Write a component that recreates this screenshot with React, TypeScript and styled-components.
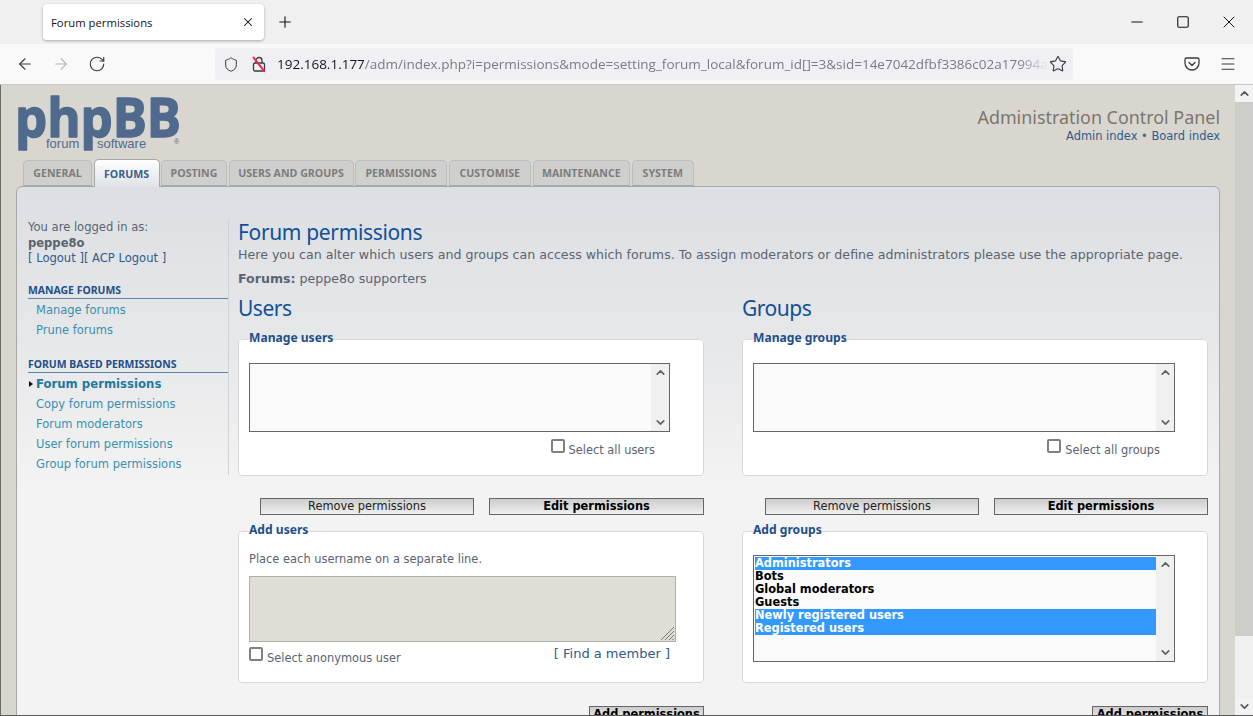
import styled, { createGlobalStyle } from "styled-components";
import {
    ArrowLeft,
    ArrowRight,
    ChevronDown,
    ChevronUp,
    Menu,
    Minus,
    Plus,
    RotateCw,
    Shield,
    Square,
    Star,
    X,
} from "lucide-react";

const GlobalStyle = createGlobalStyle`
    html, body {
        margin: 0;
        padding: 0;
        height: 100%;
        overflow: hidden;
    }
    * {
        box-sizing: border-box;
    }
`;

const BODY_FONT = `"DejaVu Sans", Verdana, sans-serif`;
const HEAD_FONT = `"Noto Sans", "Open Sans", sans-serif`;
const UI_FONT = `"Open Sans", "Noto Sans", sans-serif`;
const TEXT_GREY = "#5a6470";

const Window = styled.div`
    width: 1253px;
    height: 716px;
    display: flex;
    flex-direction: column;
    overflow: hidden;
    background: #f0f0f0;
    font-family: ${BODY_FONT};
`;

const TabBar = styled.div`
    flex: 0 0 44px;
    display: flex;
    align-items: center;
    padding: 0 0 0 43px;
    color: #15141a;
`;

const BrowserTab = styled.div`
    width: 221px;
    height: 36px;
    display: flex;
    align-items: center;
    justify-content: space-between;
    padding: 0 9px 0 8px;
    background: #fff;
    border-radius: 4px;
    box-shadow: 0 1px 3px rgba(0, 0, 0, 0.3);
    font: 11.3px ${UI_FONT};
`;

const NewTab = styled.div`
    display: flex;
    margin-left: 12px;
`;

const WindowControls = styled.div`
    margin-left: auto;
    display: flex;
    align-items: center;
    gap: 26px;
    padding-right: 14px;
`;

const WindowControl = styled.div`
    width: 20px;
    display: flex;
    justify-content: center;
`;

const Toolbar = styled.div`
    flex: 0 0 41px;
    display: flex;
    align-items: center;
    padding: 0 16px 0 16px;
    background: #f9f9f9;
    border-bottom: 1px solid #c8c8c8;
    color: #3b3a40;
`;

const NavButton = styled.div<{ $off?: boolean }>`
    display: flex;
    width: 18px;
    margin-right: 18px;
    color: ${(p) => (p.$off ? "#b9b9bd" : "#3b3a40")};
`;

const UrlBar = styled.div`
    width: 858px;
    height: 32px;
    margin-left: 91px;
    display: flex;
    align-items: center;
    padding: 0 6px 0 8px;
    background: #f0f0f4;
    border-radius: 4px;
`;

const UrlIcon = styled.div`
    position: relative;
    display: flex;
    width: 16px;
    margin-right: 12px;
`;

const LockSlash = styled.span`
    position: absolute;
    left: 7px;
    top: -1px;
    width: 1.5px;
    height: 19px;
    background: #e22850;
    transform: rotate(-38deg);
`;

const UrlText = styled.div`
    flex: 1;
    min-width: 0;
    overflow: hidden;
    white-space: nowrap;
    font: 13.5px ${UI_FONT};
    color: #7b7a80;
    margin-left: -2px;
    -webkit-mask-image: linear-gradient(to right, #000 96%, transparent 100%);
    mask-image: linear-gradient(to right, #000 96%, transparent 100%);
`;

const UrlHost = styled.span`
    color: #15141a;
`;

const RightIcons = styled.div`
    display: flex;
    align-items: center;
    gap: 19px;
    margin-left: auto;
`;

const Viewport = styled.div`
    flex: 1;
    min-height: 0;
    display: flex;
    border-left: 1px solid #6a6a6a;
    border-bottom: 1px solid #5a5a5a;
`;

const Page = styled.div`
    flex: 1;
    min-width: 0;
    overflow: hidden;
    background: #d9d6cf;
    padding: 0 15px 0 15px;
`;

const Scrollbar = styled.div`
    flex: 0 0 18px;
    display: flex;
    flex-direction: column;
    background: #f0f0f0;
    color: #555;
`;

const ScrollArrow = styled.div`
    height: 17px;
    display: flex;
    align-items: center;
    justify-content: center;
    background: #f3f3f3;
`;

const ScrollThumb = styled.div`
    height: 534px;
    background: #cdcdc9;
`;

const ScrollRest = styled.div`
    flex: 1;
`;

const Header = styled.header`
    height: 75px;
    display: flex;
    justify-content: space-between;
`;

const LogoMark = styled.svg`
    display: block;
    margin-top: 7px;
`;

const HeaderRight = styled.div`
    padding-top: 21px;
    text-align: right;
`;

const PanelTitle = styled.div`
    font: 17.9px/22px ${HEAD_FONT};
    color: #7a7670;
`;

const HeaderLinks = styled.div`
    font-size: 11.45px;
    line-height: 17px;
    color: #536482;
`;

const HeaderLink = styled.a`
    color: #2e5b8c;
`;

const Tabs = styled.nav`
    height: 26px;
    display: flex;
    align-items: flex-end;
    padding-left: 7px;
    gap: 1.5px;
    position: relative;
    z-index: 1;
`;

const TabItem = styled.a<{ $active?: boolean; $w: number }>`
    flex: 0 0 ${(p) => p.$w}px;
    height: ${(p) => (p.$active ? "28px" : "26px")};
    margin-bottom: ${(p) => (p.$active ? "-1px" : "0")};
    display: flex;
    align-items: center;
    justify-content: center;
    font: bold 10.6px ${UI_FONT};
    color: ${(p) => (p.$active ? "#35608f" : "#7c7c7c")};
    background: ${(p) =>
        p.$active ? "linear-gradient(#ffffff, #dfe2e6)" : "#cfcfcd"};
    border: 1px solid ${(p) => (p.$active ? "#a8a8a8" : "#bcbcbc")};
    border-bottom: ${(p) => (p.$active ? "none" : "1px solid #a8a8a8")};
    border-radius: 5px 5px 0 0;
`;

const Panel = styled.main`
    display: grid;
    grid-template-columns: 212px 1fr;
    padding: 33px 11px 60px 0;
    background: linear-gradient(#dcdfe3 0, #e6e7e9 150px, #f3f3f3 300px);
    border: 1px solid #a8a8a8;
    border-radius: 6px 6px 0 0;
`;

const Sidebar = styled.aside`
    height: 255px;
    padding-left: 11px;
    border-right: 1px solid #cfd2d6;
`;

const LoginBlock = styled.div`
    font-size: 11.55px;
    line-height: 15.5px;
    color: ${TEXT_GREY};
    margin-bottom: 16px;
`;

const LoginName = styled.div`
    font-weight: bold;
`;

const LoginLinks = styled.div`
    color: #2e5b8c;
`;

const MenuHead = styled.h2`
    margin: 0 0 2px;
    font: bold 10.45px/15px ${HEAD_FONT};
    color: #1d4f8a;
    border-bottom: 1px solid #5c85a8;
`;

const MenuList = styled.ul`
    list-style: none;
    margin: 0 0 16px;
    padding: 0;
`;

const MenuItem = styled.li<{ $active?: boolean }>`
    position: relative;
    height: 20px;
    padding-left: 8px;
    font-size: ${(p) => (p.$active ? "11.7px" : "11.5px")};
    line-height: 18px;
    font-weight: ${(p) => (p.$active ? "bold" : "normal")};
    color: ${(p) => (p.$active ? "#1f7a9e" : "#3a8fb0")};
`;

const ActiveArrow = styled.span`
    position: absolute;
    left: 1px;
    top: 6px;
    width: 0;
    height: 0;
    border-left: 4px solid #111;
    border-top: 3px solid transparent;
    border-bottom: 3px solid transparent;
`;

const Content = styled.section`
    padding-left: 9px;
`;

const Title = styled.h1`
    margin: 0;
    font: normal 21px/25px ${HEAD_FONT};
    letter-spacing: -0.35px;
    color: #115098;
`;

const Intro = styled.p`
    margin: 0;
    font-size: 12.62px;
    line-height: 20px;
    white-space: nowrap;
    color: ${TEXT_GREY};
`;

const ForumLine = styled.p`
    margin: 4px 0 0;
    font-size: 12.6px;
    line-height: 20px;
    color: ${TEXT_GREY};
`;

const Columns = styled.div`
    display: grid;
    grid-template-columns: 466px 466px;
    column-gap: 38px;
`;

const ColumnTitle = styled.h2`
    margin: 4px 0 8px;
    font: normal 21px/30px ${HEAD_FONT};
    letter-spacing: -0.5px;
    color: #115098;
`;

const Field = styled.fieldset<{ $h: number }>`
    height: ${(p) => p.$h}px;
    margin: 0;
    padding: 0 10px;
    min-width: 0;
    background: #fff;
    border: 1px solid #d7d7d7;
    border-radius: 4px;
`;

const FieldLegend = styled.legend`
    padding: 0 0 3px;
    font: bold 12.1px/14px ${HEAD_FONT};
    color: #1d4f8a;
`;

const ListBox = styled.div<{ $w: number; $h: number; $mt: number }>`
    width: ${(p) => p.$w}px;
    height: ${(p) => p.$h}px;
    margin-top: ${(p) => p.$mt}px;
    display: flex;
    background: #fafafa;
    border: 1px solid #666;
`;

const Options = styled.div`
    flex: 1;
    padding: 1px 0 0 1px;
`;

const OptionRow = styled.div<{ $selected?: boolean }>`
    height: 13px;
    font: bold 11.4px/13px ${BODY_FONT};
    color: ${(p) => (p.$selected ? "#fff" : "#000")};
    background: ${(p) => (p.$selected ? "#3399ff" : "transparent")};
`;

const ListScroll = styled.div`
    flex: 0 0 18px;
    display: flex;
    flex-direction: column;
    justify-content: space-between;
    align-items: center;
    padding: 2px 0;
    background: #f0f0f0;
    color: #606060;
`;

const CheckRow = styled.label<{ $right: number }>`
    display: flex;
    justify-content: flex-end;
    align-items: flex-start;
    margin-top: 7px;
    padding-right: ${(p) => p.$right}px;
    font-size: 11.4px;
    line-height: 14px;
    color: ${TEXT_GREY};
`;

const CheckBox = styled.input`
    appearance: none;
    flex: none;
    width: 14px;
    height: 14px;
    margin: 0 4px 0 0;
    background: #fff;
    border: 2px solid #808080;
    border-radius: 2px;
`;

const CheckText = styled.span`
    padding-top: 4px;
`;

const ButtonRow = styled.div`
    display: flex;
    justify-content: flex-end;
    gap: 15px;
    margin: 22px 0 8px;
`;

const ActionButton = styled.button<{ $w: number; $bold?: boolean }>`
    width: ${(p) => p.$w}px;
    height: 17px;
    padding: 0;
    font: ${(p) => (p.$bold ? "bold" : "normal")} 11.4px/15px ${BODY_FONT};
    color: ${(p) => (p.$bold ? "#000" : "#222")};
    background: linear-gradient(#cccccc, #f0f0f0);
    border: 1px solid #666;
`;

const AddRow = styled.div`
    display: flex;
    justify-content: flex-end;
    margin-top: 23px;
`;

const Hint = styled.p`
    margin: 12px 0 10px;
    font-size: 11.45px;
    line-height: 14px;
    color: ${TEXT_GREY};
`;

const NamesWrap = styled.div`
    position: relative;
    width: 427px;
    height: 66px;
`;

const NamesBox = styled.textarea`
    display: block;
    width: 100%;
    height: 100%;
    margin: 0;
    resize: none;
    background: #e0dcd6;
    border: 1px solid #b0aeaa;
    border-radius: 0;
    outline: none;
`;

const ResizeGrip = styled.svg`
    position: absolute;
    right: 1px;
    bottom: 1px;
`;

const AddFoot = styled.div`
    display: flex;
    justify-content: space-between;
    margin-top: 5px;
    padding-right: 23px;
`;

const AnonLabel = styled.label`
    display: flex;
    align-items: flex-start;
    font-size: 11.4px;
    line-height: 14px;
    color: ${TEXT_GREY};
`;

const FindLink = styled.div`
    font-size: 13px;
    line-height: 14px;
    color: #2e5b8c;
`;

const CHEVRON = { size: 13, strokeWidth: 3 };

const TABS = [
    { label: "GENERAL", w: 69 },
    { label: "FORUMS", w: 66, active: true },
    { label: "POSTING", w: 66 },
    { label: "USERS AND GROUPS", w: 125 },
    { label: "PERMISSIONS", w: 92 },
    { label: "CUSTOMISE", w: 82.5 },
    { label: "MAINTENANCE", w: 97.5 },
    { label: "SYSTEM", w: 62.5 },
];

const GROUPS = [
    { name: "Administrators", selected: true },
    { name: "Bots" },
    { name: "Global moderators" },
    { name: "Guests" },
    { name: "Newly registered users", selected: true },
    { name: "Registered users", selected: true },
];

function ListArrows() {
    return (
        <ListScroll>
            <ChevronUp {...CHEVRON} />
            <ChevronDown {...CHEVRON} />
        </ListScroll>
    );
}

function Logo() {
    return (
        <LogoMark width="170" height="62" viewBox="0 0 170 62">
            <text
                x="-1"
                y="45"
                fontFamily="'Open Sans', sans-serif"
                fontWeight="bold"
                fontSize="54"
                textLength="166"
                lengthAdjust="spacingAndGlyphs"
                fill="#4f6a8c"
                stroke="#4f6a8c"
                strokeWidth="1.5"
                strokeLinejoin="round"
            >
                phpBB
            </text>
            <text x="30" y="56" fontFamily="'Liberation Sans', sans-serif" fontSize="13" fill="#4f6a8c">
                forum
            </text>
            <text x="81" y="56" fontFamily="'Liberation Sans', sans-serif" fontSize="13" fill="#4f6a8c">
                software
            </text>
            <text x="158" y="52" fontFamily="'Liberation Sans', sans-serif" fontSize="7" fill="#4f6a8c">
                ®
            </text>
        </LogoMark>
    );
}

function App() {
    return (
        <Window>
            <GlobalStyle />
            <TabBar>
                <BrowserTab>
                    Forum permissions
                    <X size={14} strokeWidth={1.8} />
                </BrowserTab>
                <NewTab>
                    <Plus size={18} strokeWidth={1.5} />
                </NewTab>
                <WindowControls>
                    <WindowControl>
                        <Minus size={18} strokeWidth={1.1} absoluteStrokeWidth />
                    </WindowControl>
                    <WindowControl>
                        <Square size={14} strokeWidth={1.1} absoluteStrokeWidth />
                    </WindowControl>
                    <WindowControl>
                        <X size={20} strokeWidth={1} absoluteStrokeWidth />
                    </WindowControl>
                </WindowControls>
            </TabBar>

            <Toolbar>
                <NavButton>
                    <ArrowLeft size={18} strokeWidth={1.5} />
                </NavButton>
                <NavButton $off>
                    <ArrowRight size={18} strokeWidth={1.5} />
                </NavButton>
                <NavButton>
                    <RotateCw size={18} strokeWidth={1.5} />
                </NavButton>
                <UrlBar>
                    <UrlIcon>
                        <Shield size={17} strokeWidth={1.5} />
                    </UrlIcon>
                    <UrlIcon>
                        <svg width="16" height="16" viewBox="0 0 16 16" fill="none" stroke="#3b3a40" strokeWidth="1.3">
                            <rect x="2.5" y="7" width="11" height="8" rx="1.5" />
                            <path d="M5 7V4.5a3 3 0 0 1 6 0V7" />
                        </svg>
                        <LockSlash />
                    </UrlIcon>
                    <UrlText>
                        <UrlHost>192.168.1.177</UrlHost>
                        /adm/index.php?i=permissions&amp;mode=setting_forum_local&amp;forum_id[]=3&amp;sid=14e7042dfbf3386c02a17994a
                    </UrlText>
                    <Star size={18} strokeWidth={1.5} />
                </UrlBar>
                <RightIcons>
                    <svg width="16" height="16" viewBox="0 0 16 16" fill="none" stroke="#3b3a40" strokeWidth="1.3" strokeLinecap="round" strokeLinejoin="round">
                        <path d="M2.5 2h11A1.5 1.5 0 0 1 15 3.5V7a7 7 0 0 1-14 0V3.5A1.5 1.5 0 0 1 2.5 2z" />
                        <path d="M5 6.5l3 3 3-3" />
                    </svg>
                    <Menu size={18} strokeWidth={1.4} />
                </RightIcons>
            </Toolbar>

            <Viewport>
                <Page>
                    <Header>
                        <Logo />
                        <HeaderRight>
                            <PanelTitle>Administration Control Panel</PanelTitle>
                            <HeaderLinks>
                                <HeaderLink>Admin index</HeaderLink> • <HeaderLink>Board index</HeaderLink>
                            </HeaderLinks>
                        </HeaderRight>
                    </Header>

                    <Tabs>
                        {TABS.map((tab) => (
                            <TabItem key={tab.label} $w={tab.w} $active={tab.active}>
                                {tab.label}
                            </TabItem>
                        ))}
                    </Tabs>

                    <Panel>
                        <Sidebar>
                            <LoginBlock>
                                You are logged in as:
                                <LoginName>peppe8o</LoginName>
                                <LoginLinks>[ Logout ][ ACP Logout ]</LoginLinks>
                            </LoginBlock>

                            <MenuHead>MANAGE FORUMS</MenuHead>
                            <MenuList>
                                <MenuItem>Manage forums</MenuItem>
                                <MenuItem>Prune forums</MenuItem>
                            </MenuList>

                            <MenuHead>FORUM BASED PERMISSIONS</MenuHead>
                            <MenuList>
                                <MenuItem $active>
                                    <ActiveArrow />
                                    Forum permissions
                                </MenuItem>
                                <MenuItem>Copy forum permissions</MenuItem>
                                <MenuItem>Forum moderators</MenuItem>
                                <MenuItem>User forum permissions</MenuItem>
                                <MenuItem>Group forum permissions</MenuItem>
                            </MenuList>
                        </Sidebar>

                        <Content>
                            <Title>Forum permissions</Title>
                            <Intro>
                                Here you can alter which users and groups can access which forums. To assign
                                moderators or define administrators please use the appropriate page.
                            </Intro>
                            <ForumLine>
                                <b>Forums:</b> peppe8o supporters
                            </ForumLine>

                            <Columns>
                                <div>
                                    <ColumnTitle>Users</ColumnTitle>
                                    <Field $h={145}>
                                        <FieldLegend>Manage users</FieldLegend>
                                        <ListBox $w={421} $h={69} $mt={15}>
                                            <Options />
                                            <ListArrows />
                                        </ListBox>
                                        <CheckRow $right={38}>
                                            <CheckBox type="checkbox" />
                                            <CheckText>Select all users</CheckText>
                                        </CheckRow>
                                    </Field>
                                    <ButtonRow>
                                        <ActionButton $w={214}>Remove permissions</ActionButton>
                                        <ActionButton $w={215} $bold>Edit permissions</ActionButton>
                                    </ButtonRow>
                                    <Field $h={160}>
                                        <FieldLegend>Add users</FieldLegend>
                                        <Hint>Place each username on a separate line.</Hint>
                                        <NamesWrap>
                                            <NamesBox />
                                            <ResizeGrip width="15" height="15" viewBox="0 0 15 15" stroke="#777" strokeWidth="1">
                                                <path d="M1 14L14 1M5 14L14 5M9 14L14 9M12.5 14L14 12.5" />
                                            </ResizeGrip>
                                        </NamesWrap>
                                        <AddFoot>
                                            <AnonLabel>
                                                <CheckBox type="checkbox" />
                                                <CheckText>Select anonymous user</CheckText>
                                            </AnonLabel>
                                            <FindLink>[ Find a member ]</FindLink>
                                        </AddFoot>
                                    </Field>
                                    <AddRow>
                                        <ActionButton $w={115} $bold>Add permissions</ActionButton>
                                    </AddRow>
                                </div>

                                <div>
                                    <ColumnTitle>Groups</ColumnTitle>
                                    <Field $h={145}>
                                        <FieldLegend>Manage groups</FieldLegend>
                                        <ListBox $w={422} $h={69} $mt={15}>
                                            <Options />
                                            <ListArrows />
                                        </ListBox>
                                        <CheckRow $right={37}>
                                            <CheckBox type="checkbox" />
                                            <CheckText>Select all groups</CheckText>
                                        </CheckRow>
                                    </Field>
                                    <ButtonRow>
                                        <ActionButton $w={214}>Remove permissions</ActionButton>
                                        <ActionButton $w={214} $bold>Edit permissions</ActionButton>
                                    </ButtonRow>
                                    <Field $h={160}>
                                        <FieldLegend>Add groups</FieldLegend>
                                        <ListBox $w={422} $h={107} $mt={15}>
                                            <Options>
                                                {GROUPS.map((group) => (
                                                    <OptionRow key={group.name} $selected={group.selected}>
                                                        {group.name}
                                                    </OptionRow>
                                                ))}
                                            </Options>
                                            <ListArrows />
                                        </ListBox>
                                    </Field>
                                    <AddRow>
                                        <ActionButton $w={116} $bold>Add permissions</ActionButton>
                                    </AddRow>
                                </div>
                            </Columns>
                        </Content>
                    </Panel>
                </Page>

                <Scrollbar>
                    <ScrollArrow>
                        <ChevronUp {...CHEVRON} />
                    </ScrollArrow>
                    <ScrollThumb />
                    <ScrollRest />
                    <ScrollArrow>
                        <ChevronDown {...CHEVRON} />
                    </ScrollArrow>
                </Scrollbar>
            </Viewport>
        </Window>
    );
}

export default App;
